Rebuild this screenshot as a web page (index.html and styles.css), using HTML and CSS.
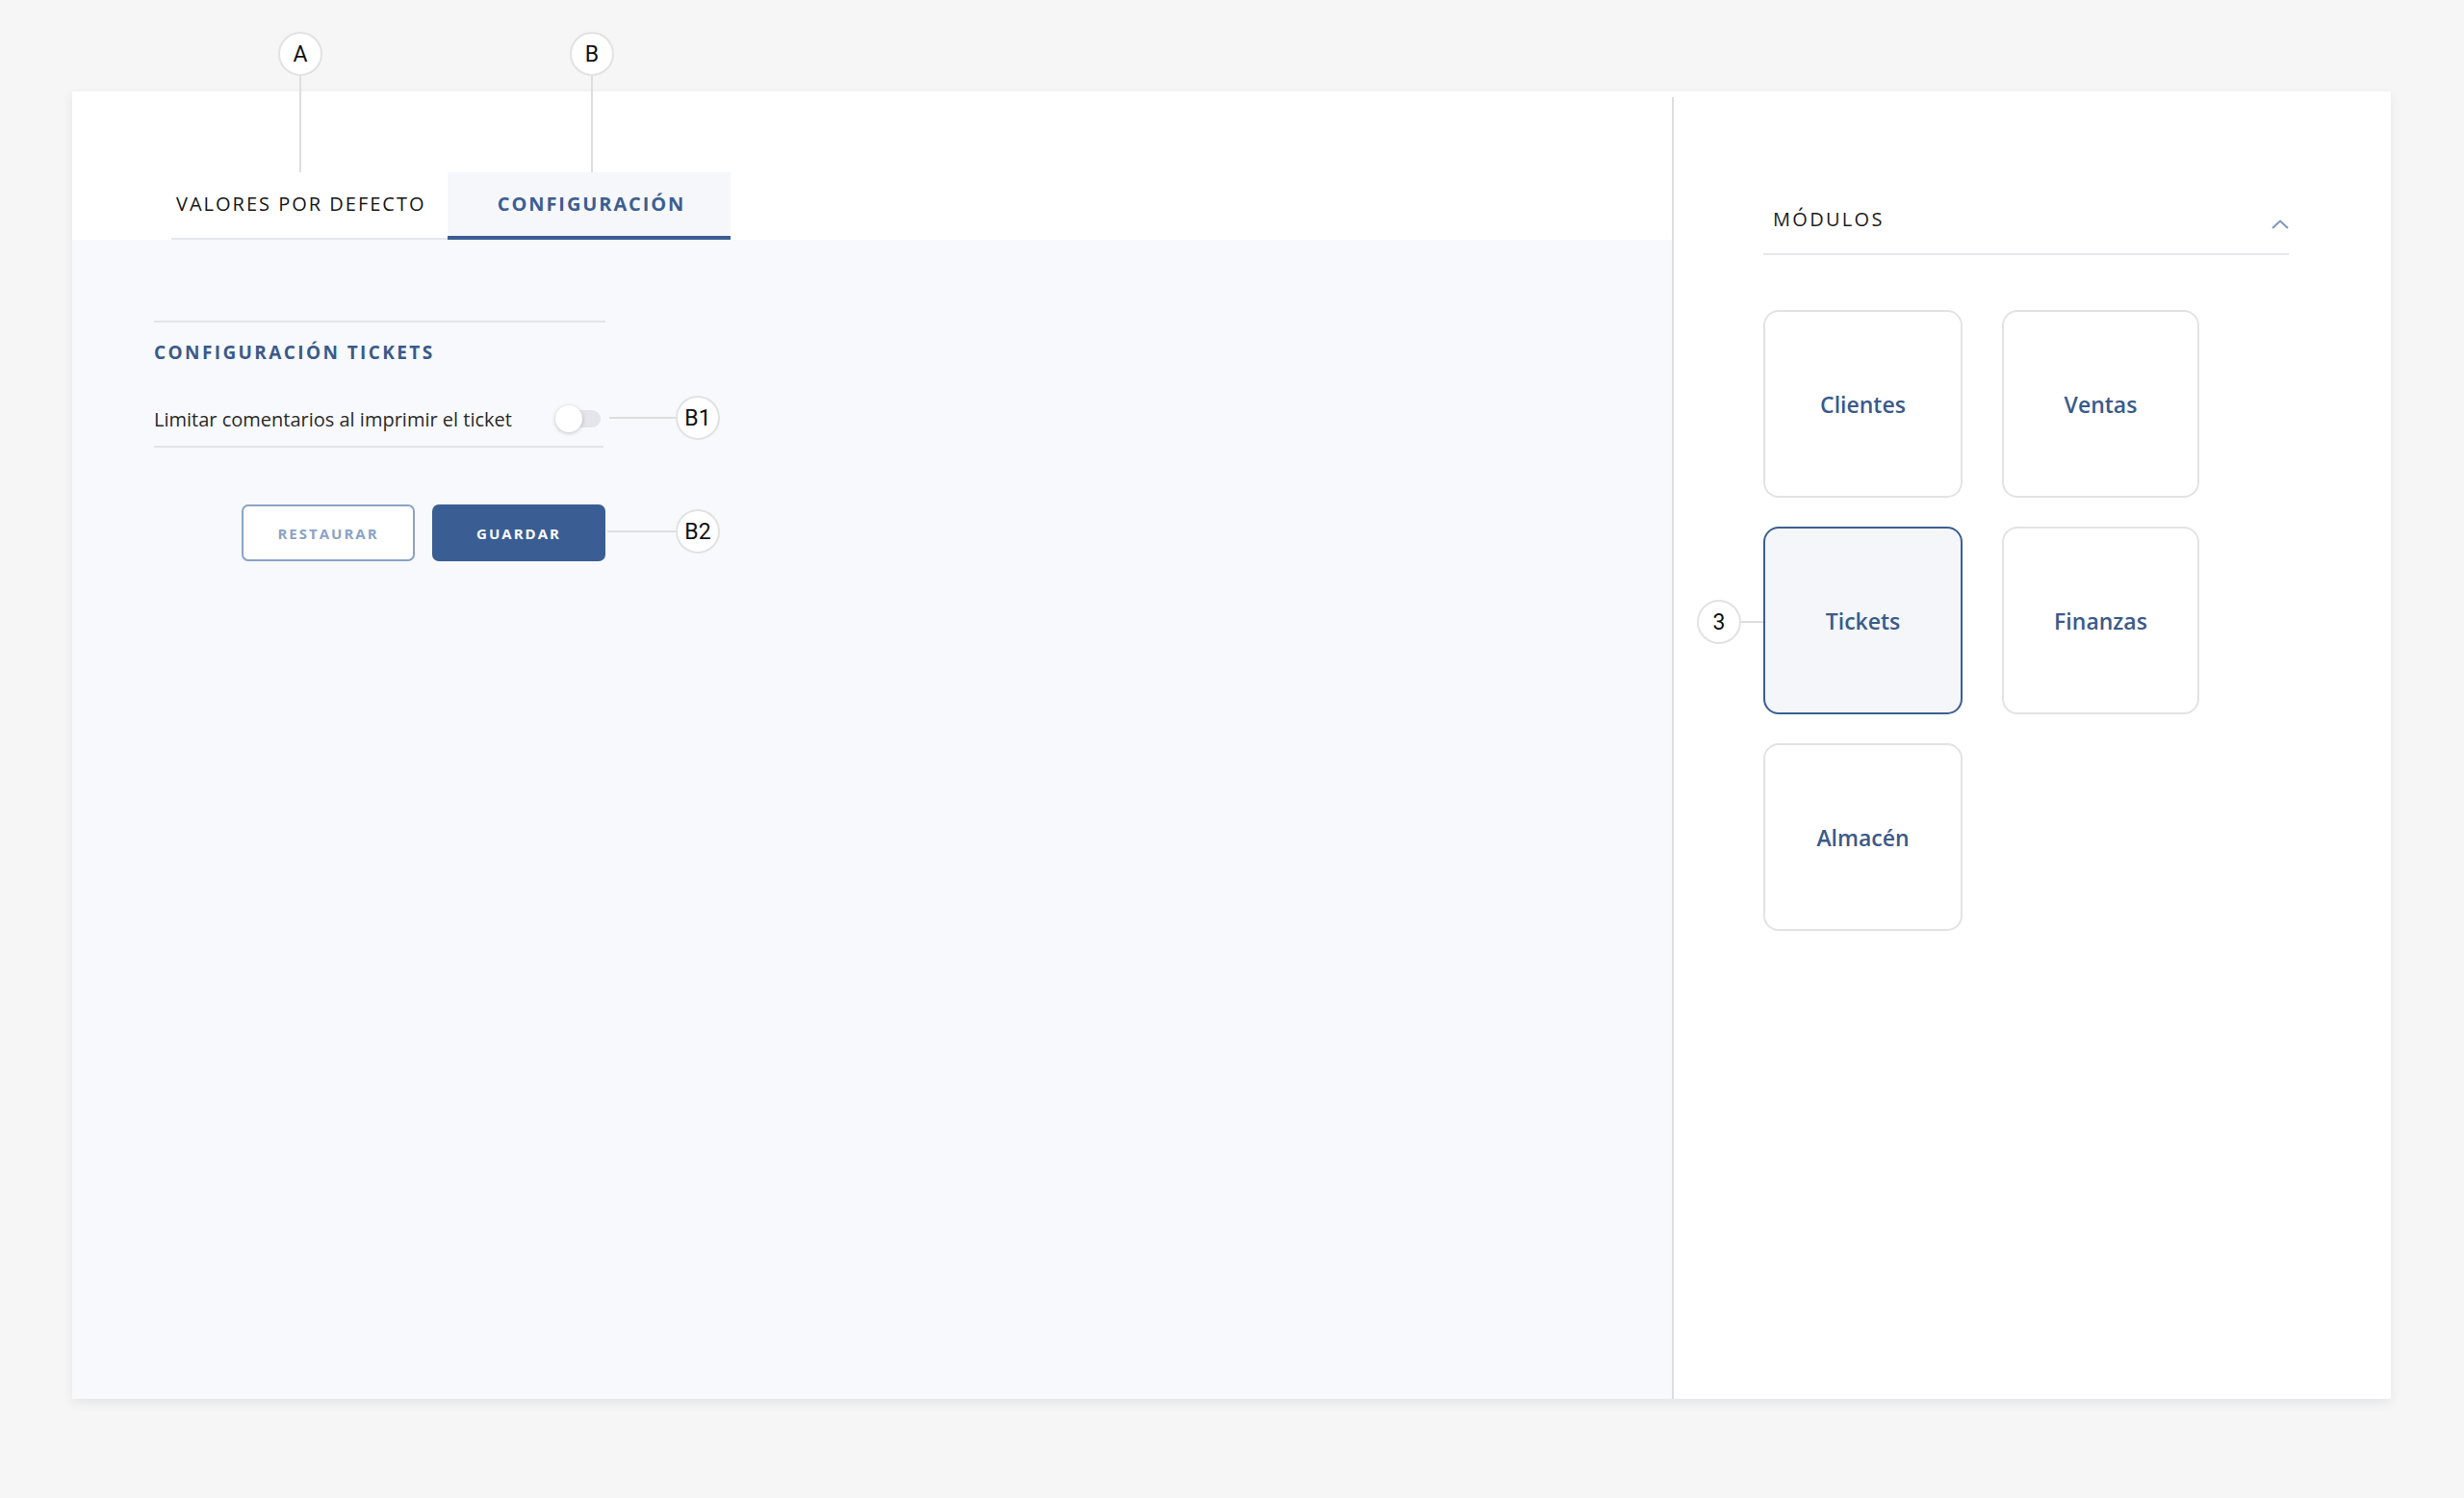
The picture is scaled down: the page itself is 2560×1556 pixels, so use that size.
FILE: index.html
```html
<!DOCTYPE html>
<html lang="es">
<head>
<meta charset="UTF-8" />
<meta name="viewport" content="width=device-width, initial-scale=1" />
<title>Configuración</title>
<link rel="stylesheet" href="styles.css">
</head>
<body>

<div class="page">
  <div class="panel">
    <div class="main">
      <div class="tabs">
        <div class="tab">VALORES POR DEFECTO</div>
        <div class="tab active">CONFIGURACIÓN</div>
      </div>

      <div class="content">
        <div class="section">
          <h2 class="section-title">CONFIGURACIÓN TICKETS</h2>
          <div class="row">
            <span>Limitar comentarios al imprimir el ticket</span>
            <div class="toggle"><span class="knob"></span></div>
          </div>
          <div class="actions">
            <button class="btn btn-outline">RESTAURAR</button>
            <button class="btn btn-primary">GUARDAR</button>
          </div>
        </div>
      </div>
    </div>

    <div class="side">
      <div class="side-header">
        <span>MÓDULOS</span>
        <svg class="chevron" width="18" height="10" viewBox="0 0 18 10">
          <path d="M1 9 L9 1.5 L17 9" fill="none" stroke="#7d97bf" stroke-width="2" />
        </svg>
      </div>
      <div class="modules">
        <div class="module">Clientes</div>
        <div class="module">Ventas</div>
        <div class="module selected">Tickets</div>
        <div class="module">Finanzas</div>
        <div class="module">Almacén</div>
      </div>
    </div>
  </div>
</div>

<!-- annotation markers -->
<div class="mark-line vline" style="left:311px; top:79px; height:100px;"></div>
<div class="mark" style="left:289px; top:33px;">A</div>

<div class="mark-line vline" style="left:614px; top:79px; height:100px;"></div>
<div class="mark" style="left:592px; top:33px;">B</div>

<div class="mark-line hline" style="left:633px; top:433px; width:70px;"></div>
<div class="mark" style="left:702px; top:411px;">B1</div>

<div class="mark-line hline" style="left:631px; top:551px; width:72px;"></div>
<div class="mark" style="left:702px; top:529px;">B2</div>

<div class="mark-line hline" style="left:1808px; top:645px; width:24px;"></div>
<div class="mark" style="left:1763px; top:623px;">3</div>

</body>
</html>
```

FILE: styles.css
```css
body {
  margin: 0;
  background: #f6f6f6;
  font-family: 'Open Sans', 'Noto Sans', sans-serif;
  color: #222;
}
.page {
  padding: 95px 76px 103px 75px;
}
.panel {
  display: flex;
  height: 1358px;
  background: #fff;
  box-shadow: 0 4px 10px rgba(60, 70, 100, 0.09);
}

/* left part */
.main {
  width: 1662px;
  display: flex;
  flex-direction: column;
}
.tabs {
  height: 154px;
  display: flex;
  align-items: flex-end;
  padding-left: 103px;
}
.tab {
  height: 70px;
  padding: 0 22px 4px 5px;
  display: flex;
  align-items: center;
  box-sizing: border-box;
  border-bottom: 2px solid #e4e7ed;
  font-size: 20px;
  letter-spacing: 2px;
  color: #151515;
}
.tab.active {
  width: 294px;
  padding: 0 0 2px 6px;
  justify-content: center;
  background: #f5f7fb;
  border-bottom: 4px solid #3b5e91;
  color: #3b5e91;
  font-weight: 700;
  letter-spacing: 1.9px;
}
.content {
  flex: 1;
  background: #f7f9fc;
  padding: 84px 0 0 85px;
}
.section {
  width: 469px;
  border-top: 2px solid #e3e4e8;
}
.section-title {
  margin: 18px 0 0;
  font-size: 19px;
  line-height: 26px;
  font-weight: 700;
  letter-spacing: 2.4px;
  color: #3b5a8a;
}
.row {
  margin-top: 28px;
  height: 56px;
  width: 467px;
  display: flex;
  align-items: center;
  justify-content: space-between;
  border-bottom: 2px solid #e3e4e8;
  font-size: 20px;
  color: #2a2a2a;
}
.toggle {
  position: relative;
  width: 36px;
  height: 18px;
  margin-right: 3px;
  border-radius: 9px;
  background: #e4e4ea;
}
.knob {
  position: absolute;
  left: -11px;
  top: -5px;
  width: 28px;
  height: 28px;
  border-radius: 50%;
  background: #fff;
  box-shadow: 0 1px 4px rgba(0, 0, 0, 0.22);
}
.actions {
  margin-top: 59px;
  display: flex;
  justify-content: flex-end;
  gap: 18px;
}
.btn {
  width: 180px;
  height: 59px;
  border-radius: 7px;
  font-family: 'Open Sans', sans-serif;
  font-size: 15px;
  font-weight: 700;
  letter-spacing: 2px;
  cursor: pointer;
}
.btn-outline {
  background: #fff;
  border: 2px solid #8aa2c8;
  color: #8aa2c6;
}
.btn-primary {
  background: #3a5e94;
  border: none;
  color: #fff;
}

/* right part */
.side {
  flex: 1;
  margin-top: 6px;
  padding: 90px 0 0 93px;
  border-left: 2px solid #dedede;
}
.side-header {
  width: 536px;
  height: 72px;
  padding-left: 10px;
  display: flex;
  align-items: center;
  justify-content: space-between;
  border-bottom: 2px solid #e8e8ec;
  font-size: 20px;
  letter-spacing: 2.3px;
  color: #1c1c1c;
}
.chevron {
  margin-top: 12px;
}
.modules {
  margin-top: 57px;
  display: grid;
  grid-template-columns: 207px 205px;
  grid-auto-rows: 195px;
  column-gap: 41px;
  row-gap: 30px;
}
.module {
  display: flex;
  align-items: center;
  justify-content: center;
  border: 2px solid #e3e3e3;
  border-radius: 16px;
  font-size: 23px;
  font-weight: 600;
  color: #3b5a8a;
}
.module.selected {
  border-color: #3b5e91;
  background: #f4f6fa;
}

/* annotations */
.mark {
  position: absolute;
  width: 42px;
  height: 42px;
  border: 2px solid #e2e2e2;
  border-radius: 50%;
  background: #fff;
  display: flex;
  align-items: center;
  justify-content: center;
  font-family: Roboto, 'Liberation Sans', sans-serif;
  font-size: 23px;
  color: #111;
}
.mark-line {
  position: absolute;
  background: #dedede;
}
.vline {
  width: 2px;
}
.hline {
  height: 2px;
}
```
